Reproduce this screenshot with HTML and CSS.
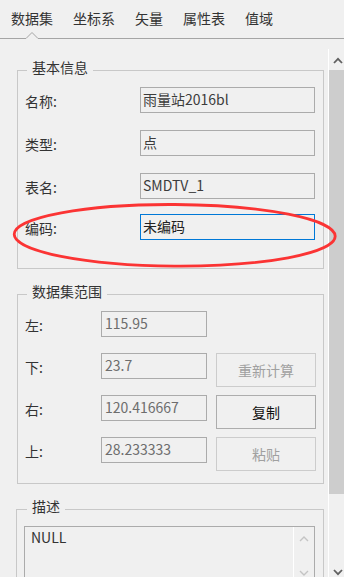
FILE: index.html
```html
<!DOCTYPE html>
<html lang="zh-CN">
<head>
<meta charset="utf-8">
<title>数据集属性</title>
<link rel="stylesheet" href="styles.css">
</head>
<body>
<div class="window">
  <nav class="tabs">
    <span class="tab tab-active">数据集<svg class="caret" width="14" height="9" viewBox="0 0 14 9"><polygon points="0.5,9 0.5,7.5 7,1.2 13.5,7.5 13.5,9" fill="#f0f0f0"/><polyline points="0,7.5 1,7.5 7,1.5 13,7.5 14,7.5" fill="none" stroke="#a5a5a5" stroke-width="1"/></svg></span>
    <span class="tab">坐标系</span>
    <span class="tab">矢量</span>
    <span class="tab">属性表</span>
    <span class="tab">值域</span>
  </nav>

  <div class="pane">
    <div class="content">
      <fieldset class="group group-info">
        <legend>基本信息</legend>
        <div class="info-grid">
          <span class="label">名称:</span><span class="field">雨量站2016bl</span>
          <span class="label">类型:</span><span class="field">点</span>
          <span class="label">表名:</span><span class="field">SMDTV_1</span>
          <span class="label label-shift">编码:</span><span class="field field-focus">未编码</span>
        </div>
      </fieldset>

      <fieldset class="group group-range">
        <legend>数据集范围</legend>
        <div class="range-grid">
          <span class="label">左:</span><span class="field field-disabled">115.95</span><span></span>
          <span class="label">下:</span><span class="field field-disabled">23.7</span><span class="btn btn-disabled">重新计算</span>
          <span class="label">右:</span><span class="field field-disabled">120.416667</span><span class="btn">复制</span>
          <span class="label">上:</span><span class="field field-disabled">28.233333</span><span class="btn btn-disabled">粘贴</span>
        </div>
      </fieldset>

      <fieldset class="group group-desc">
        <legend>描述</legend>
        <div class="textarea">
          <div class="textarea-text">NULL</div>
          <div class="textarea-scroll">
            <svg width="10" height="6" viewBox="0 0 10 6"><polyline points="1,5 5,1 9,5" fill="none" stroke="#c4c4c4" stroke-width="1.4"/></svg>
            <svg width="10" height="6" viewBox="0 0 10 6"><polyline points="1,1 5,5 9,1" fill="none" stroke="#c4c4c4" stroke-width="1.4"/></svg>
          </div>
        </div>
      </fieldset>
    </div>

    <div class="scrollbar">
      <div class="sb-btn sb-up"><svg width="10" height="7" viewBox="0 0 10 7"><polyline points="1,6 5,1.8 9,6" fill="none" stroke="#606060" stroke-width="1.8"/></svg></div>
      <div class="sb-thumb"></div>
      <div class="sb-track"></div>
      <div class="sb-btn sb-down"><svg width="10" height="7" viewBox="0 0 10 7"><polyline points="1,1 5,5.2 9,1" fill="none" stroke="#606060" stroke-width="1.8"/></svg></div>
    </div>
  </div>

  <svg class="highlight" width="344" height="577" viewBox="0 0 344 577"><ellipse cx="174.7" cy="235.3" rx="160.5" ry="30.8" fill="none" stroke="#fb3434" stroke-width="2.8" transform="rotate(0.35 174.7 235.3)"/></svg>
</div>
</body>
</html>
```

FILE: styles.css
```css
html, body {
  margin: 0;
  padding: 0;
  background: #f0f0f0;
}

body {
  font-family: "Noto Sans CJK SC", "Noto Sans", sans-serif;
  font-size: 14px;
  color: #333333;
}

.window {
  position: relative;
  width: 344px;
  height: 577px;
  overflow: hidden;
  background: #f0f0f0;
}

/* Tabs */
.tabs {
  display: flex;
  gap: 20px;
  height: 38px;
  padding-left: 11px;
  border-bottom: 1px solid #a5a5a5;
}

.tab {
  position: relative;
  line-height: 37px;
  color: #333333;
  white-space: nowrap;
}

.caret {
  position: absolute;
  left: 14px;
  top: 31px;
  display: block;
}

/* Pane with scrollbar */
.pane {
  display: flex;
  margin-top: 10px;
  height: 528px;
}

.content {
  width: 328px;
  flex: none;
}

.scrollbar {
  flex: none;
  width: 18px;
  border-left: 1px solid #ffffff;
  display: flex;
  flex-direction: column;
  background: #f0f0f0;
}

.sb-btn {
  display: flex;
  justify-content: center;
  flex: none;
}

.sb-btn svg {
  display: block;
}

.sb-up {
  height: 21px;
  align-items: center;
  padding-top: 1px;
  box-sizing: border-box;
}

.sb-thumb {
  height: 424px;
  background: #cdcdcd;
  flex: none;
}

.sb-track {
  flex: 1;
}

.sb-down {
  height: 21px;
  align-items: flex-end;
  padding-bottom: 1px;
  box-sizing: border-box;
}

/* Group boxes */
.group {
  margin: 15px 4px 0 17px;
  padding: 6px 7px 26px;
  border: 1px solid #c8c8c8;
  min-width: 0;
}

.group-info {
  margin-top: 11px;
}

.group-range {
  padding-bottom: 20px;
}

.group-desc {
  margin-left: 16px;
  padding: 6px 8px 20px 7px;
}

.group legend {
  margin-left: 2px;
  padding: 0 5px 7px;
  font-size: 14px;
  line-height: 14px;
  color: #333333;
}

.group-desc legend {
  margin-left: 3px;
}

.label {
  display: block;
  height: 26px;
  box-sizing: border-box;
  padding-top: 3px;
  line-height: 23px;
  color: #333333;
  white-space: nowrap;
}

.field {
  display: block;
  height: 26px;
  box-sizing: border-box;
  border: 1px solid #ababab;
  padding: 0 2px 2px;
  line-height: 22px;
  color: #3c3c3c;
  white-space: nowrap;
  overflow: hidden;
}

.field-focus {
  border-color: #0078d7;
  color: #222222;
}

.field-disabled {
  color: #6d6d6d;
  padding-left: 3px;
}

.info-grid {
  display: grid;
  grid-template-columns: 115px 175px;
  grid-auto-rows: 26px;
  row-gap: 17px;
}

.label-shift,
.label-shift + .field {
  margin-top: -2px;
}

.range-grid {
  display: grid;
  grid-template-columns: 67px 106px 100px;
  column-gap: 9px;
  grid-auto-rows: 26px;
  row-gap: 16px;
}

.btn {
  display: block;
  align-self: start;
  height: 34px;
  box-sizing: border-box;
  border: 1px solid #adadad;
  text-align: center;
  line-height: 32px;
  color: #111111;
}

.btn-disabled {
  border-color: #cccccc;
  color: #a0a0a0;
}

/* Description textarea */
.textarea {
  display: flex;
  width: 291px;
  height: 70px;
  box-sizing: border-box;
  border: 1px solid #ababab;
}

.textarea-text {
  flex: 1;
  padding: 0 6px;
  line-height: 20px;
  color: #333333;
}

.textarea-scroll {
  flex: none;
  width: 20px;
  border-left: 1px solid #ffffff;
  display: flex;
  flex-direction: column;
  align-items: center;
  padding-top: 9px;
  gap: 28px;
}

.textarea-scroll svg {
  display: block;
}

/* Red annotation */
.highlight {
  position: absolute;
  left: 0;
  top: 0;
  pointer-events: none;
}
```
